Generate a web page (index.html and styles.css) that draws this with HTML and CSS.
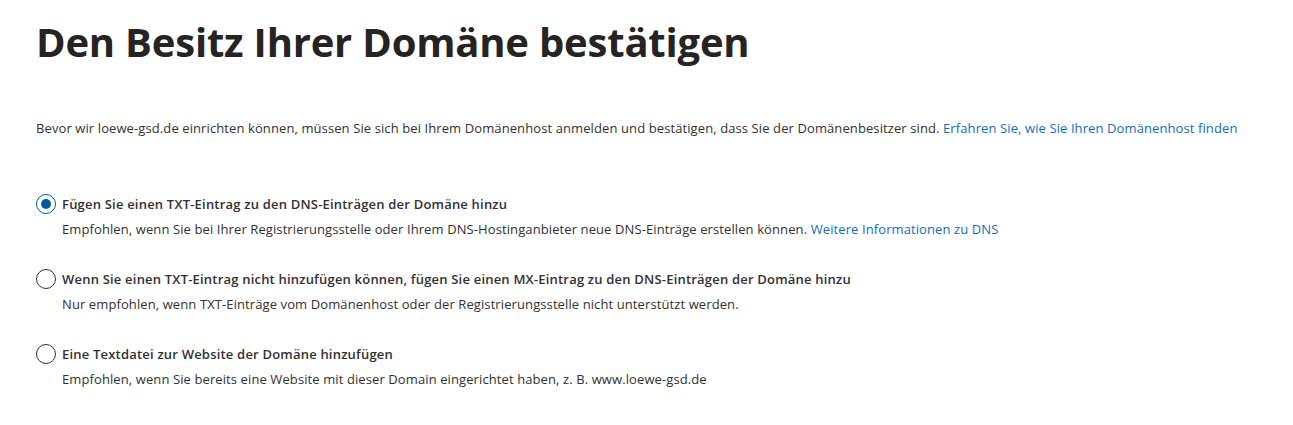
FILE: index.html
```html
<!DOCTYPE html>
<html lang="de">
<head>
<meta charset="utf-8">
<title>Den Besitz Ihrer Domäne bestätigen</title>
<link rel="stylesheet" href="styles.css">
</head>
<body>
<main class="page">
  <h1 class="title">Den Besitz Ihrer Domäne bestätigen</h1>
  <p class="intro">Bevor wir loewe-gsd.de einrichten können, müssen Sie sich bei Ihrem Domänenhost anmelden und bestätigen, dass Sie der Domänenbesitzer sind. <a class="link" href="#">Erfahren Sie, wie Sie Ihren Domänenhost finden</a></p>
  <div class="options">
    <label class="option">
      <span class="radio checked"></span>
      <span class="text">
        <span class="label">Fügen Sie einen TXT-Eintrag zu den DNS-Einträgen der Domäne hinzu</span>
        <span class="desc">Empfohlen, wenn Sie bei Ihrer Registrierungsstelle oder Ihrem DNS-Hostinganbieter neue DNS-Einträge erstellen können. <a class="link" href="#">Weitere Informationen zu DNS</a></span>
      </span>
    </label>
    <label class="option">
      <span class="radio"></span>
      <span class="text">
        <span class="label">Wenn Sie einen TXT-Eintrag nicht hinzufügen können, fügen Sie einen MX-Eintrag zu den DNS-Einträgen der Domäne hinzu</span>
        <span class="desc">Nur empfohlen, wenn TXT-Einträge vom Domänenhost oder der Registrierungsstelle nicht unterstützt werden.</span>
      </span>
    </label>
    <label class="option">
      <span class="radio"></span>
      <span class="text">
        <span class="label">Eine Textdatei zur Website der Domäne hinzufügen</span>
        <span class="desc">Empfohlen, wenn Sie bereits eine Website mit dieser Domain eingerichtet haben, z. B. www.loewe-gsd.de</span>
      </span>
    </label>
  </div>
</main>
</body>
</html>
```
FILE: styles.css
```css
* { box-sizing: border-box; }
html, body { margin: 0; padding: 0; background: #ffffff; }
body {
  font-family: "Open Sans", "Noto Sans", sans-serif;
  color: #323130;
}
.page {
  padding: 14px 36px 0 36px;
}
.title {
  margin: 0;
  font-size: 40px;
  font-weight: 700;
  line-height: 56px;
  color: #252423;
  letter-spacing: -0.2px;
}
.intro {
  margin: 48px 0 0 0;
  font-size: 13px;
  line-height: 20px;
  letter-spacing: 0.1px;
  color: #323130;
}
.link { color: #106ebe; text-decoration: none; }
.options {
  margin-top: 56px;
  display: flex;
  flex-direction: column;
  gap: 30px;
}
.option {
  display: flex;
  align-items: flex-start;
  gap: 6px;
}
.radio {
  width: 20px;
  height: 20px;
  border-radius: 50%;
  border: 1.5px solid #323130;
  flex: 0 0 auto;
  display: flex;
  align-items: center;
  justify-content: center;
}
.radio.checked { border-color: #005a9e; }
.radio.checked::after {
  content: "";
  width: 10px;
  height: 10px;
  border-radius: 50%;
  background: #005a9e;
}
.text { display: flex; flex-direction: column; gap: 5px; }
.label { font-size: 13px; font-weight: 600; line-height: 20px; letter-spacing: 0.2px; color: #323130; }
.desc { font-size: 13px; line-height: 20px; letter-spacing: 0.1px; color: #323130; }
```
